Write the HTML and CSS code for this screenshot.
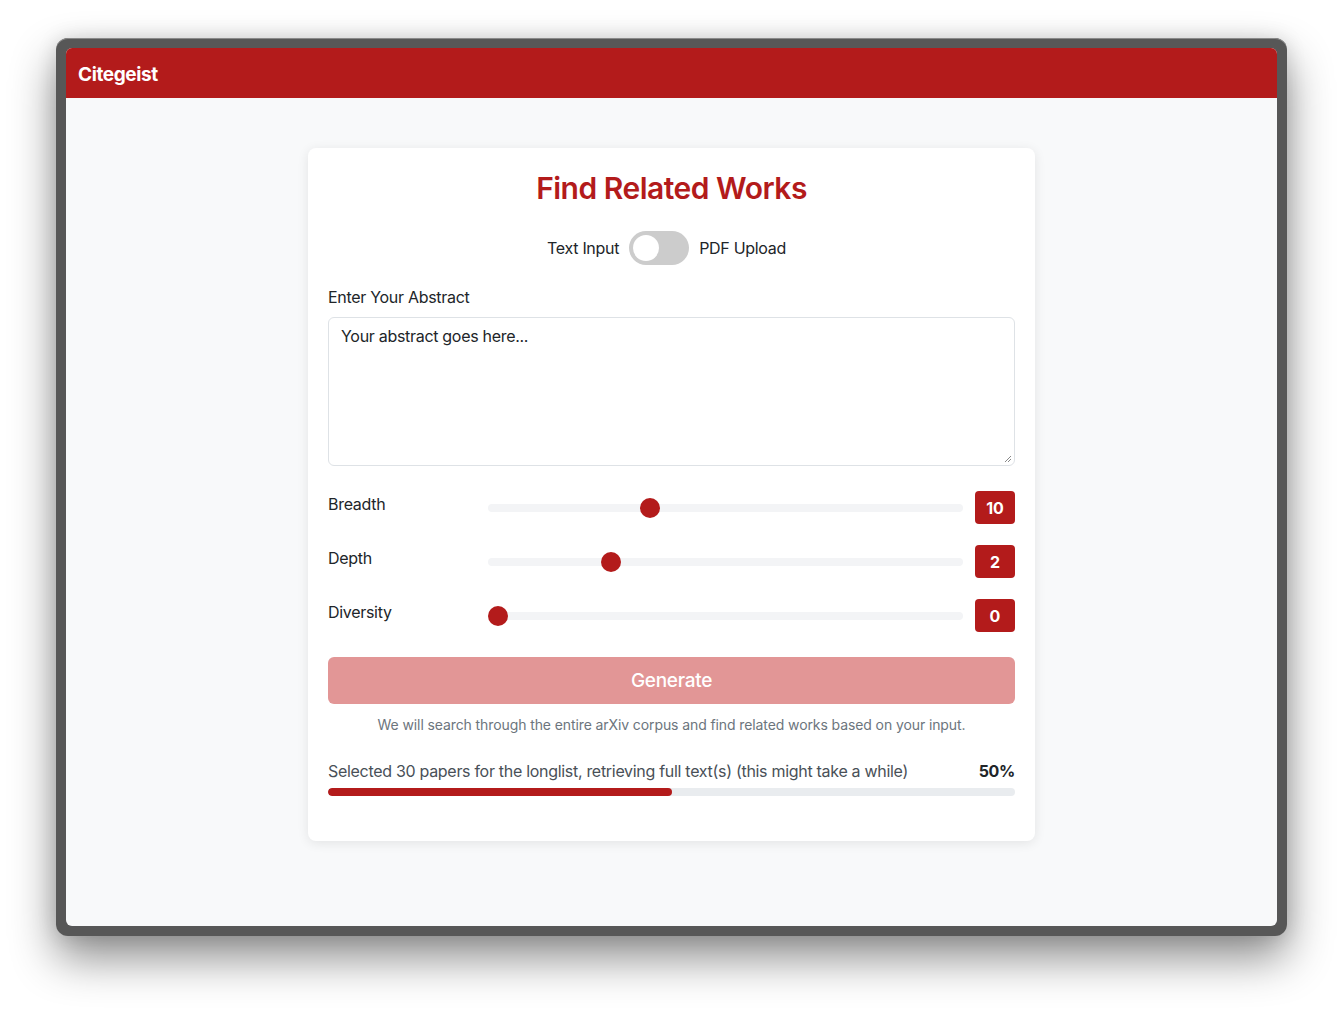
FILE: index.html
```html
<!DOCTYPE html>
<html lang="en">
<head>
<meta charset="utf-8">
<title>Citegeist</title>
<link rel="stylesheet" href="styles.css">
</head>
<body>
<div class="frame">
  <div class="window">
    <header class="topbar"><span class="brand">Citegeist</span></header>
    <main class="main">
      <section class="card">
        <h1 class="title">Find Related Works</h1>
        <div class="mode">
          <span class="mode-label">Text Input</span>
          <span class="switch"><span class="knob"></span></span>
          <span class="mode-label">PDF Upload</span>
        </div>
        <label class="field-label">Enter Your Abstract</label>
        <div class="textarea">
          <span class="placeholder">Your abstract goes here...</span>
          <svg class="grip" width="8" height="8" viewBox="0 0 8 8"><path d="M7 1 L1 7 M7 4 L4 7" stroke="#888" stroke-width="1" fill="none"/></svg>
        </div>
        <div class="sliders">
          <div class="slider-row">
            <span class="slider-label">Breadth</span>
            <div class="track"><span class="thumb" style="left: 32%"></span></div>
            <span class="badge">10</span>
          </div>
          <div class="slider-row">
            <span class="slider-label">Depth</span>
            <div class="track"><span class="thumb" style="left: 23.8%"></span></div>
            <span class="badge">2</span>
          </div>
          <div class="slider-row">
            <span class="slider-label">Diversity</span>
            <div class="track"><span class="thumb" style="left: 0%"></span></div>
            <span class="badge">0</span>
          </div>
        </div>
        <button class="generate" disabled>Generate</button>
        <p class="hint">We will search through the entire arXiv corpus and find related works based on your input.</p>
        <div class="progress">
          <div class="progress-head">
            <span class="progress-text">Selected 30 papers for the longlist, retrieving full text(s) (this might take a while)</span>
            <span class="progress-pct">50%</span>
          </div>
          <div class="bar"><div class="bar-fill" style="width: 50%"></div></div>
        </div>
      </section>
    </main>
  </div>
</div>
</body>
</html>
```
FILE: styles.css
```css
* { box-sizing: border-box; }
html, body { margin: 0; padding: 0; background: #ffffff; }
body {
  font-family: "Inter", "Liberation Sans", Arial, sans-serif;
  color: #212529;
  width: 1343px;
  height: 1010px;
  overflow: hidden;
  letter-spacing: -0.3px;
}
.frame {
  margin: 38px 56px 0 56px;
  height: 898px;
  background: #575757;
  border-radius: 12px;
  padding: 10px;
  box-shadow: inset 0 1px 0 #8a8a8a, 0 22px 45px rgba(0,0,0,0.45), 0 0 20px rgba(0,0,0,0.12);
}
.window {
  height: 100%;
  border-radius: 6px;
  overflow: hidden;
  background: #f8f9fa;
  display: flex;
  flex-direction: column;
}
.topbar {
  height: 50px;
  background: #b31b1b;
  display: flex;
  align-items: center;
  padding-left: 12px;
  padding-top: 2px;
  flex: none;
}
.brand {
  color: #ffffff;
  font-weight: 700;
  font-size: 19px;
  letter-spacing: -0.4px;
}
.main {
  flex: 1;
  display: flex;
  justify-content: center;
  align-items: flex-start;
  padding-top: 50px;
}
.card {
  width: 727px;
  background: #ffffff;
  border-radius: 8px;
  box-shadow: 0 2px 12px rgba(0,0,0,0.09);
  padding: 20px 20px 45px 20px;
  display: flex;
  flex-direction: column;
}
.title {
  margin: 1px 0 0 0;
  text-align: center;
  color: #b31b1b;
  font-size: 30px;
  font-weight: 600;
  line-height: 38px;
  letter-spacing: -0.5px;
}
.mode {
  margin-top: 24px;
  display: flex;
  justify-content: center;
  align-items: center;
  gap: 10px;
  height: 34px;
  padding-right: 10px;
}
.mode-label { font-size: 16px; color: #212529; }
.switch {
  width: 60px;
  height: 34px;
  border-radius: 17px;
  background: #cccccc;
  position: relative;
  display: inline-block;
}
.knob {
  position: absolute;
  left: 4px;
  top: 4px;
  width: 26px;
  height: 26px;
  border-radius: 50%;
  background: #ffffff;
}
.field-label {
  margin-top: 20px;
  font-size: 16px;
  line-height: 24px;
}
.textarea {
  margin-top: 8px;
  height: 149px;
  border: 1px solid #dee2e6;
  border-radius: 6px;
  padding: 6px 12px;
  font-size: 16px;
  line-height: 24px;
  position: relative;
}
.placeholder { color: #212529; }
.grip { position: absolute; right: 2px; bottom: 2px; }
.sliders {
  margin-top: 25px;
  display: flex;
  flex-direction: column;
  gap: 21px;
}
.slider-row {
  display: flex;
  align-items: center;
  height: 33px;
}
.slider-label {
  width: 160px;
  font-size: 16px;
  margin-top: -7px;
}
.track {
  flex: 1;
  height: 8px;
  border-radius: 4px;
  background: #f3f4f6;
  position: relative;
  margin-right: 12px;
}
.thumb {
  position: absolute;
  top: -6px;
  width: 20px;
  height: 20px;
  border-radius: 50%;
  background: #b31b1b;
}
.badge {
  width: 40px;
  height: 33px;
  border-radius: 4px;
  background: #b31b1b;
  color: #ffffff;
  font-weight: 700;
  font-size: 16px;
  letter-spacing: 0;
  display: flex;
  align-items: center;
  justify-content: center;
}
.generate {
  margin-top: 25px;
  height: 47px;
  border: none;
  border-radius: 6px;
  background: #e29696;
  color: #ffffff;
  font-family: inherit;
  font-size: 19px;
  font-weight: 500;
  letter-spacing: -0.3px;
}
.hint {
  margin: 10px 0 0 0;
  text-align: center;
  color: #6c757d;
  font-size: 14px;
  line-height: 21px;
  letter-spacing: -0.1px;
}
.progress { margin-top: 24px; }
.progress-head {
  display: flex;
  justify-content: space-between;
  align-items: center;
  font-size: 16px;
  line-height: 24px;
}
.progress-text { color: #495057; }
.progress-pct { font-weight: 700; color: #212529; }
.bar {
  margin-top: 5px;
  height: 8px;
  border-radius: 4px;
  background: #e9ecef;
  overflow: hidden;
}
.bar-fill {
  height: 100%;
  background: #b31b1b;
  border-radius: 4px;
}
```
